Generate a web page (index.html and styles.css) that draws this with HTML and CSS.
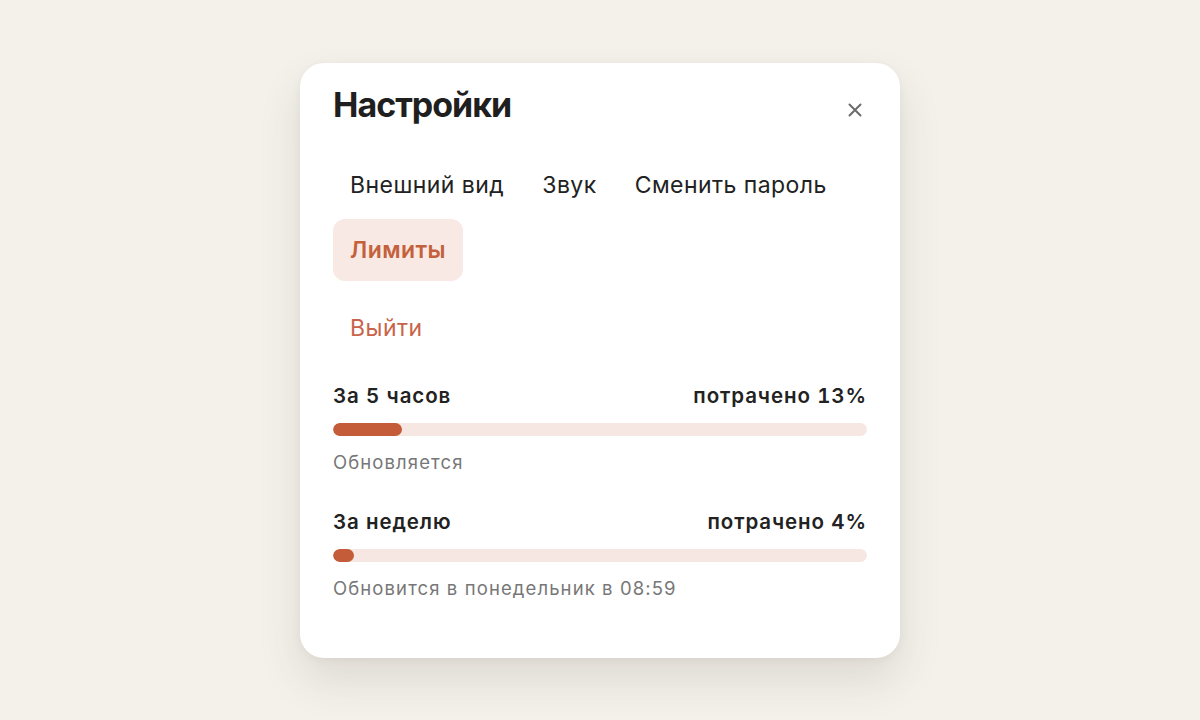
FILE: index.html
```html
<!DOCTYPE html>
<html lang="ru">
<head>
<meta charset="utf-8">
<title>Настройки</title>
<link rel="stylesheet" href="styles.css">
</head>
<body>
<div class="dialog">
  <div class="header">
    <h1 class="title">Настройки</h1>
    <button class="close" aria-label="Закрыть">
      <svg width="14" height="14" viewBox="0 0 14 14"><path d="M1.5 1.5L12.5 12.5M12.5 1.5L1.5 12.5" stroke="#6b6b6b" stroke-width="2" stroke-linecap="round"/></svg>
    </button>
  </div>
  <nav class="tabs">
    <button class="tab">Внешний вид</button>
    <button class="tab">Звук</button>
    <button class="tab">Сменить пароль</button>
    <button class="tab active">Лимиты</button>
  </nav>
  <button class="tab logout">Выйти</button>
  <section class="usage">
    <div class="usage-head"><span>За 5 часов</span><span>потрачено 13%</span></div>
    <div class="track"><div class="fill" style="width:13%"></div></div>
    <div class="note">Обновляется</div>
  </section>
  <section class="usage">
    <div class="usage-head"><span>За неделю</span><span>потрачено 4%</span></div>
    <div class="track"><div class="fill" style="width:4%"></div></div>
    <div class="note">Обновится в понедельник в 08:59</div>
  </section>
</div>
</body>
</html>
```
FILE: styles.css
```css
* { box-sizing: border-box; }
html, body { margin: 0; height: 100%; }
body {
  background: #f4f1eb;
  font-family: Inter, "Noto Sans", sans-serif;
  color: #1f1f1f;
  display: flex;
  align-items: center;
  justify-content: center;
}
.dialog {
  width: 600px;
  height: 595px;
  background: #fff;
  border-radius: 24px;
  padding: 20px 33px 0 33px;
  box-shadow: 0 22px 44px rgba(60, 50, 30, 0.12), 0 2px 8px rgba(60, 50, 30, 0.05);
}
.header {
  display: flex;
  align-items: center;
  justify-content: space-between;
  height: 44px;
}
.title {
  margin: 0;
  font-size: 34px;
  font-weight: 700;
  letter-spacing: -1px;
  color: #1f1f1f;
}
.close {
  border: 0;
  background: none;
  padding: 0;
  width: 14px;
  height: 14px;
  margin-right: 5px;
  margin-top: 10px;
  display: flex;
}
.tabs {
  display: flex;
  flex-wrap: wrap;
  gap: 3px 4px;
  margin-top: 27px;
}
.tab {
  border: 0;
  background: none;
  font-family: inherit;
  font-size: 23px;
  letter-spacing: 0.45px;
  color: #222;
  height: 62px;
  padding: 0 17px;
  border-radius: 12px;
}
.tab.active {
  background: #f8e9e4;
  color: #c4613d;
  font-weight: 600;
}
.logout {
  display: block;
  margin-top: 16px;
  color: #c8644a;
}
.usage { margin-top: 23px; }
.usage + .usage { margin-top: 34px; }
.usage-head {
  display: flex;
  justify-content: space-between;
  font-size: 20.5px;
  font-weight: 600;
  letter-spacing: 0.9px;
  font-variant-numeric: tabular-nums;
  line-height: 28px;
  color: #222;
}
.track {
  margin-top: 13px;
  height: 13px;
  border-radius: 7px;
  background: #f7e7e2;
  overflow: hidden;
}
.fill {
  height: 100%;
  border-radius: 7px;
  background: #c45c3a;
}
.note {
  margin-top: 14px;
  font-size: 18.5px;
  letter-spacing: 1.1px;
  line-height: 24px;
  color: #777;
}
```
